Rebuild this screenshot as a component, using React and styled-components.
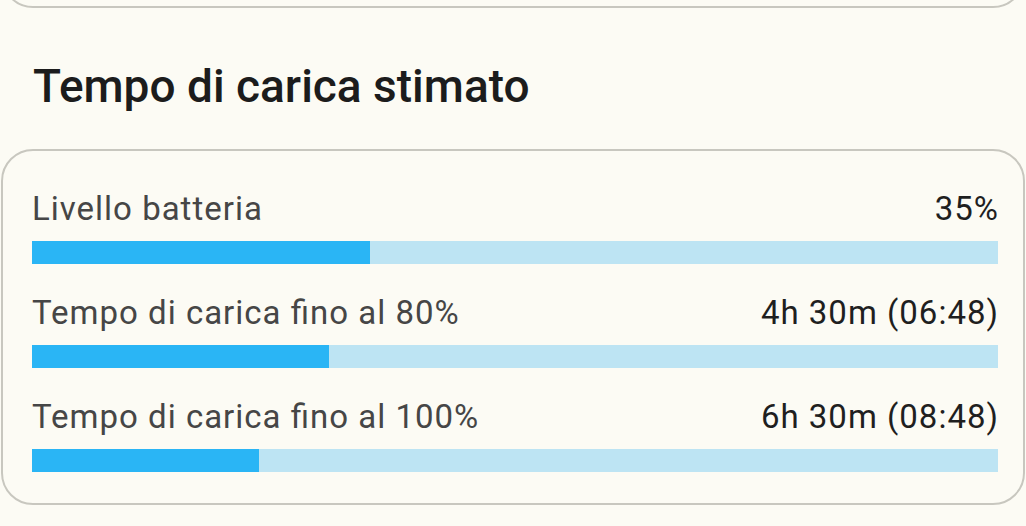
import React from "react";
import styled, { createGlobalStyle } from "styled-components";

const Global = createGlobalStyle`
  html, body { margin: 0; padding: 0; background: #fcfbf4; }
  body { font-family: Roboto, "Noto Sans", sans-serif; overflow: hidden; }
  * { box-sizing: border-box; }
`;

const Page = styled.div`
  width: 1026px;
  height: 526px;
  background: #fcfbf4;
  display: flex;
  flex-direction: column;
`;

const PrevClip = styled.div`
  height: 8px;
  overflow: hidden;
  display: flex;
  flex-direction: column;
  justify-content: flex-end;
  padding: 0 1px;
`;

const PrevCard = styled.div`
  flex-shrink: 0;
  height: 80px;
  border: 2px solid #c8c7bf;
  border-radius: 32px;
`;

const Heading = styled.h2`
  margin: 51px 0 0 33px;
  font-size: 46px;
  font-weight: 500;
  line-height: normal;
  color: #1c1c1c;
  letter-spacing: 0;
`;

const Card = styled.div`
  margin: 36px 1px 0 1px;
  border: 2px solid #c8c7bf;
  border-radius: 32px;
  padding: 38px 25px 31px 29px;
  display: flex;
  flex-direction: column;
  gap: 29px;
`;

const Row = styled.div`
  display: flex;
  flex-direction: column;
  gap: 13px;
`;

const LabelLine = styled.div`
  display: flex;
  justify-content: space-between;
  align-items: baseline;
  font-size: 33px;
  line-height: normal;
  letter-spacing: 1px;
`;

const Label = styled.span`
  color: #464646;
`;

const Value = styled.span`
  color: #1f1f1f;
  margin-right: -1px;
`;

const Track = styled.div`
  height: 23px;
  background: #bde4f3;
  display: flex;
`;

const Fill = styled.div`
  height: 100%;
  background: #2ab5f5;
`;

const rows = [
  { label: "Livello batteria", value: "35%", pct: 35 },
  { label: "Tempo di carica \uFB01no al 80%", value: "4h 30m (06:48)", pct: 30.75 },
  { label: "Tempo di carica \uFB01no al 100%", value: "6h 30m (08:48)", pct: 23.5 },
];

export default function App() {
  return (
    <Page>
      <Global />
      <PrevClip>
        <PrevCard />
      </PrevClip>
      <Heading>Tempo di carica stimato</Heading>
      <Card>
        {rows.map((r) => (
          <Row key={r.label}>
            <LabelLine>
              <Label>{r.label}</Label>
              <Value>{r.value}</Value>
            </LabelLine>
            <Track>
              <Fill style={{ width: `${r.pct}%` }} />
            </Track>
          </Row>
        ))}
      </Card>
    </Page>
  );
}
